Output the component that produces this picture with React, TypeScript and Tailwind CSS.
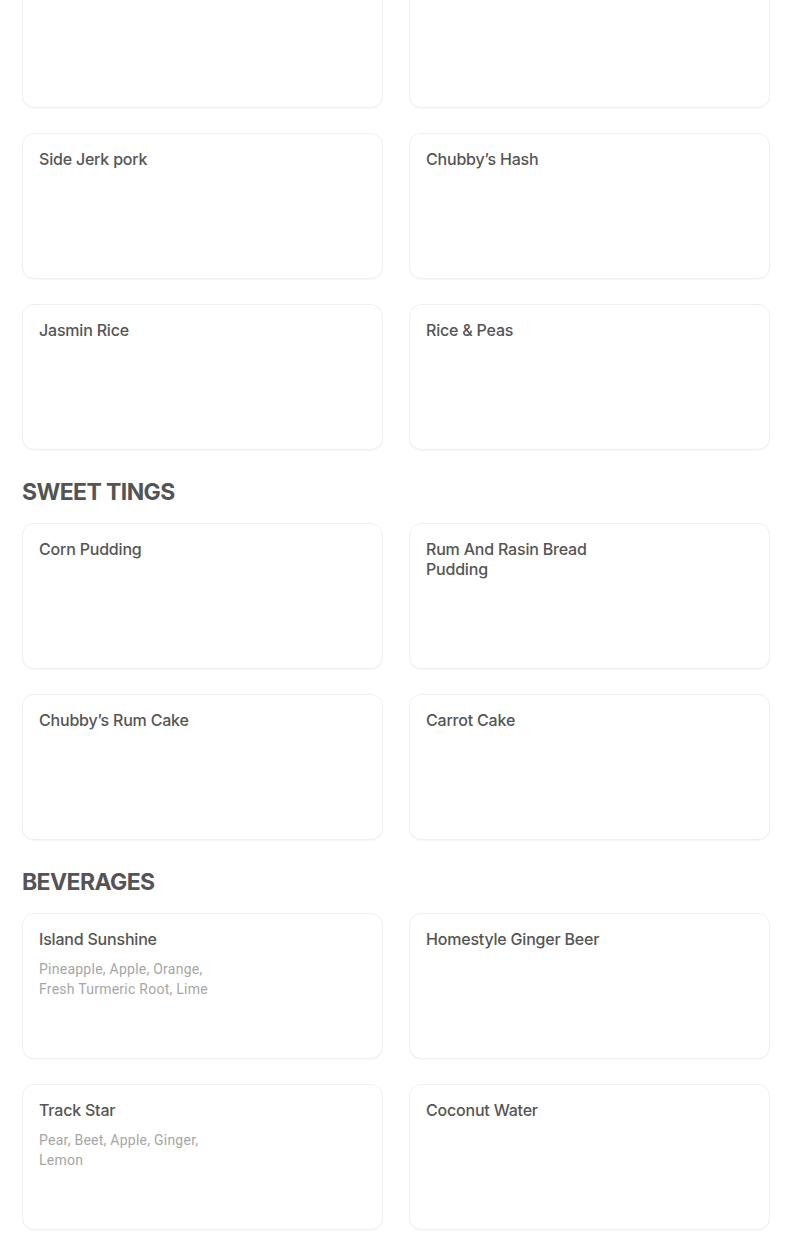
import React from 'react';

interface MenuItem {
  name: string;
  description?: string;
}

interface MenuSection {
  title?: string;
  items: MenuItem[];
}

const sections: MenuSection[] = [
  {
    items: [
      { name: '' },
      { name: '' },
      { name: 'Side Jerk pork' },
      { name: 'Chubby’s Hash' },
      { name: 'Jasmin Rice' },
      { name: 'Rice & Peas' },
    ],
  },
  {
    title: 'SWEET TINGS',
    items: [
      { name: 'Corn Pudding' },
      { name: 'Rum And Rasin Bread Pudding' },
      { name: 'Chubby’s Rum Cake' },
      { name: 'Carrot Cake' },
    ],
  },
  {
    title: 'BEVERAGES',
    items: [
      { name: 'Island Sunshine', description: 'Pineapple, Apple, Orange, Fresh Turmeric Root, Lime' },
      { name: 'Homestyle Ginger Beer' },
      { name: 'Track Star', description: 'Pear, Beet, Apple, Ginger, Lemon' },
      { name: 'Coconut Water' },
    ],
  },
];

const ItemCard: React.FC<{ item: MenuItem }> = ({ item }) => (
  <div className="h-[146px] rounded-xl border border-[#f0f0f0] bg-white px-4 pt-[15px] shadow-[0_1px_1px_rgba(0,0,0,0.03)]">
    {item.name && (
      <div
        className="max-w-[200px] text-[16px] font-medium leading-5 tracking-[-0.2px] text-[#555555]"
        style={{ fontFamily: 'Inter, "Liberation Sans", sans-serif' }}
      >
        {item.name}
      </div>
    )}
    {item.description && (
      <div className="mt-[10px] max-w-[196px] text-[14px] leading-5 tracking-[0.25px] text-[#a6a6a6]">
        {item.description}
      </div>
    )}
  </div>
);

const App: React.FC = () => {
  return (
    <div className="min-h-screen overflow-hidden bg-white" style={{ fontFamily: 'Roboto, "Liberation Sans", sans-serif' }}>
      <div className="-mt-[38px] ml-[22px] w-[748px] pb-[19px]">
        {sections.map((section, i) => (
          <div key={i}>
            {section.title && (
              <h2
                className="mt-[26px] mb-[15px] text-[23px] font-bold leading-8 tracking-[-0.6px] text-[#545454]"
                style={{ fontFamily: 'Inter, "Liberation Sans", sans-serif' }}
              >
                {section.title}
              </h2>
            )}
            <div className="grid grid-cols-2 gap-x-[26px] gap-y-[25px]">
              {section.items.map((item, j) => (
                <ItemCard key={j} item={item} />
              ))}
            </div>
          </div>
        ))}
      </div>
    </div>
  );
};

export default App;
